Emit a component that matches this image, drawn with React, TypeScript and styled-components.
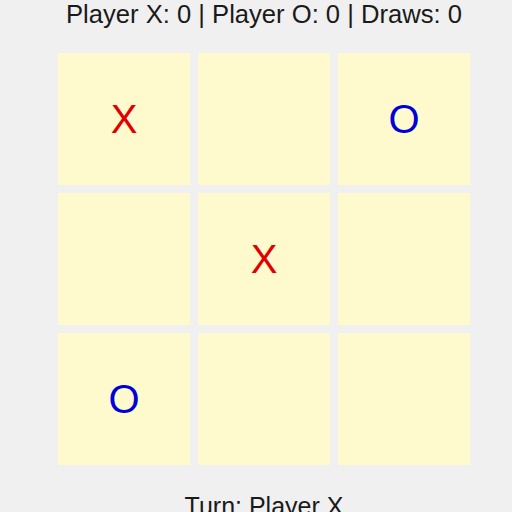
import React, { useState } from 'react'
import styled, { createGlobalStyle } from 'styled-components'

type Mark = 'X' | 'O' | null

const GlobalStyle = createGlobalStyle`
  html, body {
    margin: 0;
    padding: 0;
    background: #f0f0f0;
    font-family: "Liberation Sans", Arial, sans-serif;
    overflow: hidden;
  }
`

const Page = styled.div`
  display: flex;
  flex-direction: column;
  align-items: center;
  padding-left: 16px;
  height: 512px;
`

const Score = styled.div`
  font-size: 25.6px;
  color: #1a1a1a;
  line-height: 29px;
  margin-bottom: 24px;
`

const Board = styled.div`
  display: grid;
  grid-template-columns: repeat(3, 132px);
  grid-template-rows: repeat(3, 132px);
  gap: 8px;
`

const Cell = styled.button<{ $mark: Mark }>`
  border: none;
  padding: 0;
  margin: 0;
  background: #fffacd;
  display: flex;
  align-items: center;
  justify-content: center;
  font-family: "Liberation Sans", Arial, sans-serif;
  font-size: 40px;
  cursor: pointer;
  color: ${(p) => (p.$mark === 'X' ? '#e00000' : '#0000d8')};
`

const Turn = styled.div`
  margin-top: 27px;
  font-size: 25px;
  line-height: 29px;
  color: #1a1a1a;
`

const initial: Mark[] = ['X', null, 'O', null, 'X', null, 'O', null, null]

export default function App() {
  const [cells] = useState<Mark[]>(initial)
  return (
    <>
      <GlobalStyle />
      <Page>
        <Score>Player X: 0 | Player O: 0 | Draws: 0</Score>
        <Board>
          {cells.map((m, i) => (
            <Cell key={i} $mark={m}>
              {m}
            </Cell>
          ))}
        </Board>
        <Turn>Turn: Player X</Turn>
      </Page>
    </>
  )
}
